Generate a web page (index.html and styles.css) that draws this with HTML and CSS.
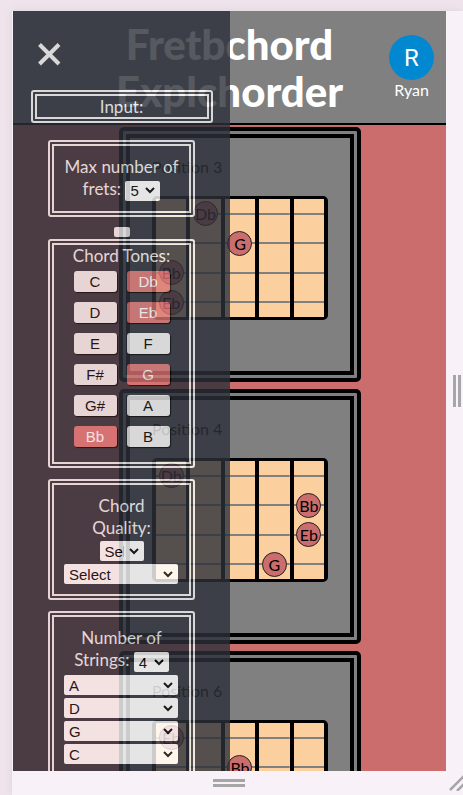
FILE: index.html
```html
<!DOCTYPE html>
<html lang="en">
<head>
<meta charset="utf-8">
<title>Fretboard Explorer</title>
<link rel="stylesheet" href="styles.css">
</head>
<body>
<div class="device">
  <div class="screen">
    <header class="header">
      <h1 class="title">Fretbchord<br>Explchorder</h1>
      <div class="user">
        <span class="avatar">R</span>
        <span>Ryan</span>
      </div>
    </header>
    <main class="positions" id="positions"></main>
    <aside class="drawer">
      <button class="close" type="button" aria-label="Close">
        <svg width="24" height="24" viewBox="0 0 24 24"><path d="M2.500 2.500L22 22M22 2.500L2.500 22" stroke="#efefef" stroke-width="4" fill="none"/></svg>
      </button>
      <h2 class="heading">Input:</h2>
      <section class="box">
        <label for="frets">Max number of<br>frets:</label>
        <select id="frets" class="digit"><option>5</option></select>
      </section>
      <button class="blank" type="button" aria-label="Apply"></button>
      <section class="box tones">
        <h3 class="label">Chord Tones:</h3>
        <div class="keys">
          <button type="button" class="key">C</button>
          <button type="button" class="key on">Db</button>
          <button type="button" class="key">D</button>
          <button type="button" class="key on">Eb</button>
          <button type="button" class="key">E</button>
          <button type="button" class="key">F</button>
          <button type="button" class="key">F#</button>
          <button type="button" class="key on">G</button>
          <button type="button" class="key">G#</button>
          <button type="button" class="key">A</button>
          <button type="button" class="key on">Bb</button>
          <button type="button" class="key">B</button>
        </div>
      </section>
      <section class="box">
        <label for="root">Chord<br>Quality:</label><br>
        <select id="root" class="short"><option>Select</option></select>
        <select class="wide" aria-label="Quality"><option>Select</option></select>
      </section>
      <section class="box">
        <label for="strings">Number of<br>Strings:</label>
        <select id="strings" class="digit"><option>4</option></select>
        <select class="wide" aria-label="String 1"><option>A</option></select>
        <select class="wide" aria-label="String 2"><option>D</option></select>
        <select class="wide" aria-label="String 3"><option>G</option></select>
        <select class="wide" aria-label="String 4"><option>C</option></select>
      </section>
    </aside>
  </div>
  <div class="grip grip-side"></div>
  <div class="grip grip-bottom"></div>
  <svg class="corner" width="14" height="16" viewBox="0 0 14 16"><path d="M1 15L15 1M8 16L15 9" stroke="#a6a6a6" stroke-width="2.5" fill="none"/></svg>
</div>
<script src="board.js"></script>
</body>
</html>
```
FILE: styles.css
```css
* {
  box-sizing: border-box;
}

body {
  margin: 0;
  height: 100vh;
  padding: 11px 0 0 12px;
  background: #efe4eb;
  font-family: Lato, "Gill Sans", sans-serif;
  font-size: 17px;
  line-height: 22px;
}

.device {
  height: 100%;
  display: grid;
  grid-template-columns: 1fr 17px;
  grid-template-rows: 1fr 24px;
  background: #f8f1f8;
  box-shadow: 0 0 8px #dcd5dc;
}

.screen {
  position: relative;
  overflow: hidden;
  min-height: 0;
  margin-left: 1px;
  background: #cb6d6d;
}

.header {
  display: grid;
  grid-template-columns: 1fr auto 1fr;
  height: 114px;
  padding-top: 10px;
  background: #808080;
  border-bottom: 2px solid #000;
  color: #fff;
}

.title {
  grid-column: 2;
  margin: 0;
  font-size: 42px;
  line-height: 47px;
  font-weight: 900;
  text-align: center;
}

.user {
  display: flex;
  flex-direction: column;
  align-items: center;
  justify-self: end;
  padding: 14px 12px 0 0;
  font-size: 16px;
  line-height: 20px;
}

.avatar {
  display: grid;
  place-items: center;
  width: 45px;
  height: 45px;
  border-radius: 50%;
  background: #0288d1;
  font: 24px Roboto, sans-serif;
}

.positions {
  display: flex;
  flex-direction: column;
  align-items: center;
  gap: 7px;
  padding: 2px 0 0 21px;
}

.card {
  width: 242px;
  height: 255px;
  padding: 18px 22px;
  border: 11px double #000;
  border-radius: 5px;
  background: #808080;
}

.name {
  margin: 0 0 18px;
  font-size: 16px;
  font-weight: 400;
}

.board {
  display: grid;
  grid-template-columns: repeat(5, 1fr);
  grid-template-rows: repeat(4, 1fr);
  height: 124px;
  border: 2px solid #000;
  border-width: 3px 2px;
  border-radius: 5px;
  background: #fbd09e;
}

.fret {
  display: grid;
  place-items: center;
  min-height: 0;
  border: 0 solid #000;
  border-width: 0 2px;
  background: linear-gradient(#808080, #808080) center / 100% 2px no-repeat;
}

.note {
  width: 25px;
  height: 25px;
  border: 1px solid #222;
  border-radius: 50%;
  background: #cb6d6d;
  font-size: 16px;
  line-height: 23px;
  text-align: center;
}

.drawer {
  position: absolute;
  top: 0;
  left: 0;
  width: 217px;
  height: 100%;
  overflow: hidden;
  display: flex;
  flex-direction: column;
  align-items: center;
  background: #2c3039;
  color: #efefef;
  opacity: 0.8;
}

.close {
  align-self: flex-start;
  flex: none;
  width: 24px;
  height: 24px;
  margin: 31px 0 24px 24px;
  padding: 0;
  border: 0;
  background: none;
}

.heading {
  flex: none;
  width: 182px;
  margin: 0 0 17px;
  border: 6px double #efefef;
  border-radius: 3px;
  font-size: 17px;
  line-height: 21px;
  font-weight: 400;
  text-align: center;
}

.box {
  flex: none;
  width: 147px;
  margin-bottom: 11px;
  padding: 10px;
  border: 6px double #efefef;
  border-radius: 3px;
  text-align: center;
}

.label {
  margin: 0 0 4px;
  font-size: inherit;
  font-weight: 400;
}

.blank {
  flex: none;
  width: 16px;
  height: 10px;
  margin: -1px 0 2px;
  padding: 0;
  border: 0;
  border-radius: 2px;
  background: #efefef;
}

.tones {
  padding: 0 10px 15px;
}

.keys {
  display: grid;
  grid-template-columns: 43px 43px;
  justify-content: center;
  gap: 10px;
}

.key {
  height: 21px;
  padding: 0;
  border: 0;
  border-radius: 3px;
  background: #efefef;
  box-shadow: 1px 1px 1px #000;
  color: #000;
  font: 15px "Liberation Sans", sans-serif;
}

.key.on {
  background: #d97474;
  color: #fff;
}

select {
  appearance: none;
  height: 20px;
  padding: 0 18px 0 5px;
  border: 0;
  border-radius: 2px;
  background: #fff url("data:image/svg+xml,%3Csvg xmlns='http://www.w3.org/2000/svg' width='10' height='7'%3E%3Cpath d='M1 1l4 4 4-4' fill='none' stroke='%23000' stroke-width='2'/%3E%3C/svg%3E") right 5px center no-repeat;
  color: #000;
  font: 15px "Liberation Sans", sans-serif;
  vertical-align: middle;
}

.digit {
  width: 35px;
}

.short {
  width: 44px;
  padding-right: 20px;
}

.wide {
  display: block;
  width: 114px;
  margin-top: 3px;
}

.grip {
  place-self: center;
  border: 0 solid #a6a6a6;
}

.grip-side {
  justify-self: end;
  width: 8px;
  height: 32px;
  margin-right: 2px;
  border-width: 0 3px;
}

.grip-bottom {
  width: 32px;
  height: 8px;
  border-width: 3px 0;
}

.corner {
  place-self: start end;
  margin-top: 4px;
}
```
FILE: board.js
```javascript
const positions = [
  { name: "Position 3", notes: { "0-1": "Db", "1-2": "G", "2-0": "Bb", "3-0": "Eb" } },
  { name: "Position 4", notes: { "0-0": "Db", "1-4": "Bb", "2-4": "Eb", "3-3": "G" } },
  { name: "Position 6", notes: { "0-0": "Eb", "1-2": "Bb" } }
];

const root = document.getElementById("positions");
for (const position of positions) {
  let frets = "";
  for (let string = 0; string < 4; string++) {
    for (let fret = 0; fret < 5; fret++) {
      const note = position.notes[string + "-" + fret];
      frets += `<div class="fret">${note ? `<span class="note">${note}</span>` : ""}</div>`;
    }
  }
  root.insertAdjacentHTML(
    "beforeend",
    `<article class="card"><h2 class="name">${position.name}</h2><div class="board">${frets}</div></article>`
  );
}
```
